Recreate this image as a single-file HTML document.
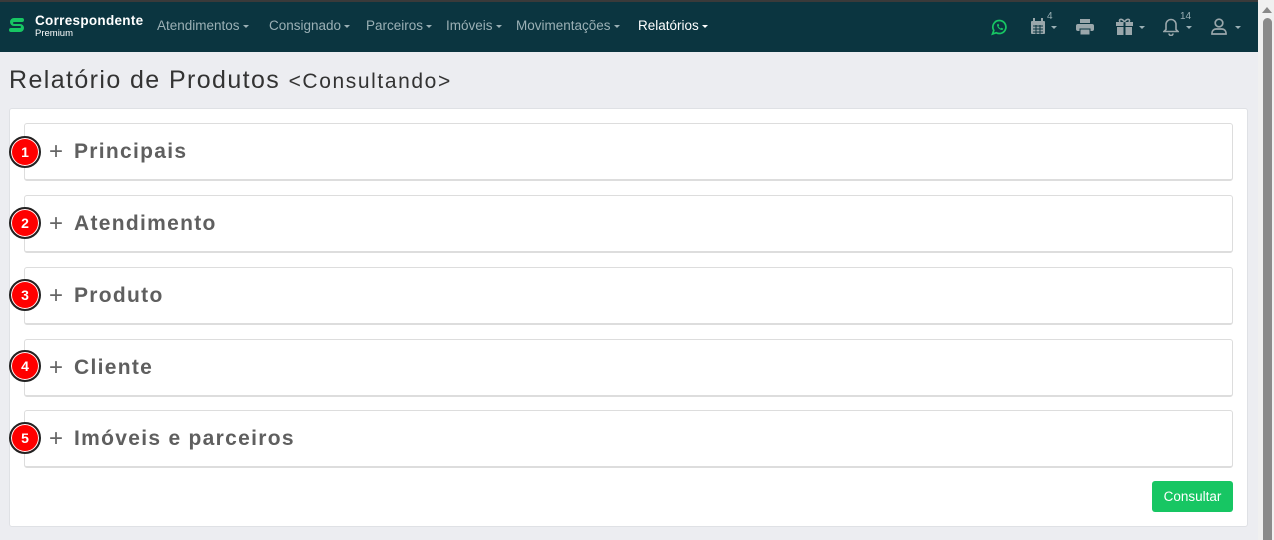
<!DOCTYPE html>
<html><head><meta charset="utf-8"><style>
*{box-sizing:border-box;margin:0;padding:0}
body{width:1274px;height:540px;overflow:hidden;background:#ecedf1;font-family:"Liberation Sans",sans-serif;position:relative}
.top{position:absolute;left:0;top:0;width:1258px;height:2px;background:#3a3a3a}
.nav{position:absolute;left:0;top:2px;width:1258px;height:50px;background:#0b3540;color:#9bb0b5;font-size:13.5px}
.nav .it{position:absolute;top:16px;white-space:nowrap}
.car{display:inline-block;width:0;height:0;border-left:3px solid transparent;border-right:3px solid transparent;border-top:3px solid currentColor;vertical-align:middle;margin-left:3px}
.sb{position:absolute;left:1258px;top:0;width:16px;height:540px;background:#f0f0f0}
.thumb{position:absolute;left:1263px;top:18px;width:9px;height:522px;background:#8a8a8a;border-radius:5px 5px 0 0}
h1{position:absolute;left:9px;top:66px;font-weight:normal;font-size:25px;color:#333;letter-spacing:1.4px;white-space:nowrap}
h1 small{font-size:21px;letter-spacing:1.6px}
.card{position:absolute;left:9px;top:108px;width:1239px;height:419px;background:#fff;border:1px solid #dfe1e5;border-radius:3px}
.p{position:absolute;left:24px;width:1209px;height:58px;background:#fff;border:1px solid #ddd;border-bottom:2px solid #ddd;border-radius:3px}
.p .t{position:absolute;left:49px;top:16px;font-size:21px;font-weight:bold;color:#5f5f5f;letter-spacing:1.3px;white-space:nowrap}
.p .pl{position:absolute;left:24px;top:14px;font-size:24px;color:#666;font-weight:normal}
.b{position:absolute;left:9px;width:32px;height:32px;border-radius:50%;background:#f00;border:2px solid #222;box-shadow:0 0 0 1px #fff inset;color:#fff;font-weight:bold;font-size:14px;text-align:center;line-height:28px}
.btn{position:absolute;left:1152px;top:481px;width:81px;height:31px;background:#17c663;border-radius:3px;color:#fff;font-size:13.5px;text-align:center;line-height:31px}
</style></head><body>
<div class="top"></div>
<div class="nav">
<svg style="position:absolute;left:9px;top:14px" width="16" height="20" viewBox="0 0 16 20"><path d="M4 2h9a2 2 0 0 1 0 4H5a1 1 0 0 0 0 2h6a4 4 0 0 1 0 8H2a2 2 0 0 1 0-4h9a1 1 0 0 0 0-2H5a4 4 0 0 1 0-8z" fill="#17c663"/></svg>
<div class="it" style="left:35px;top:11px;color:#fff;font-weight:bold;font-size:13.5px;letter-spacing:0.3px">Correspondente</div>
<div class="it" style="left:35px;top:26px;color:#fff;font-size:9.5px">Premium</div>
<div class="it" style="left:157px">Atendimentos<span class="car"></span></div>
<div class="it" style="left:269px">Consignado<span class="car"></span></div>
<div class="it" style="left:366px">Parceiros<span class="car"></span></div>
<div class="it" style="left:446px">Imóveis<span class="car"></span></div>
<div class="it" style="left:516px">Movimentações<span class="car"></span></div>
<div class="it" style="left:638px;color:#fff">Relatórios<span class="car"></span></div>
<svg style="position:absolute;left:991px;top:17px" width="17" height="17" viewBox="0 0 17 17"><path d="M8.5 1.5a6.5 6.5 0 1 1-3.2 12.2L1.5 15l1.3-3.6A6.5 6.5 0 0 1 8.5 1.5z" fill="none" stroke="#17c663" stroke-width="1.7"/><path d="M6 5.5c0 3 2.5 5.5 5.5 5.5l.8-1.4-1.8-.8-.7.7c-1-.4-1.9-1.3-2.3-2.3l.7-.7-.8-1.8z" fill="#17c663"/></svg>
<svg style="position:absolute;left:1030px;top:16px" width="16" height="17" viewBox="0 0 16 17"><rect x="1" y="3" width="14" height="13" rx="1" fill="#9aa7ab"/><rect x="3" y="0" width="2" height="4" fill="#9aa7ab"/><rect x="11" y="0" width="2" height="4" fill="#9aa7ab"/><path d="M3 8h10M3 11h10M3 14h10M6 7v9M10 7v9" stroke="#0b3540" stroke-width="1"/></svg>
<div class="it" style="left:1047px;top:9px;font-size:10px">4</div><span class="car" style="position:absolute;left:1051px;top:24px;margin:0"></span>
<svg style="position:absolute;left:1076px;top:17px" width="18" height="16" viewBox="0 0 18 16"><rect x="4" y="0" width="10" height="4" fill="#9aa7ab"/><rect x="0" y="5" width="18" height="7" rx="2" fill="#9aa7ab"/><rect x="4" y="10" width="10" height="6" fill="#9aa7ab" stroke="#0b3540"/></svg>
<svg style="position:absolute;left:1116px;top:16px" width="17" height="17" viewBox="0 0 17 17"><rect x="0" y="4" width="17" height="4" fill="#9aa7ab"/><rect x="1" y="9" width="15" height="8" fill="#9aa7ab"/><rect x="7.5" y="4" width="2" height="13" fill="#0b3540"/><path d="M8.5 4C6 0 2 1 4 4M8.5 4C11 0 15 1 13 4" stroke="#9aa7ab" stroke-width="1.6" fill="none"/></svg>
<span class="car" style="position:absolute;left:1139px;top:24px;margin:0"></span>
<svg style="position:absolute;left:1163px;top:16px" width="16" height="18" viewBox="0 0 16 18"><path d="M8 1.5a5 5 0 0 0-5 5v5l-2 2h14l-2-2v-5a5 5 0 0 0-5-5z" fill="none" stroke="#9aa7ab" stroke-width="1.6"/><path d="M6 15.5a2 2 0 0 0 4 0" fill="none" stroke="#9aa7ab" stroke-width="1.6"/></svg>
<div class="it" style="left:1180px;top:9px;font-size:10px">14</div><span class="car" style="position:absolute;left:1186px;top:24px;margin:0"></span>
<svg style="position:absolute;left:1211px;top:16px" width="16" height="17" viewBox="0 0 16 17"><circle cx="8" cy="5" r="3.8" fill="none" stroke="#9aa7ab" stroke-width="1.7"/><path d="M1 16v-1a4 4 0 0 1 4-4h6a4 4 0 0 1 4 4v1z" fill="none" stroke="#9aa7ab" stroke-width="1.7"/></svg>
<span class="car" style="position:absolute;left:1235px;top:24px;margin:0"></span>
</div>
<div class="sb"></div><div class="thumb"></div>
<svg style="position:absolute;left:1261px;top:6px" width="12" height="8"><path d="M1 7L6 1l5 6z" fill="#888"/></svg>
<h1>Relatório de Produtos <small>&lt;Consultando&gt;</small></h1>
<div class="card"></div>
<div class="p" style="top:123px"><span class="pl">+</span><span class="t">Principais</span></div>
<div class="p" style="top:195px"><span class="pl">+</span><span class="t">Atendimento</span></div>
<div class="p" style="top:267px"><span class="pl">+</span><span class="t">Produto</span></div>
<div class="p" style="top:339px"><span class="pl">+</span><span class="t">Cliente</span></div>
<div class="p" style="top:410px"><span class="pl">+</span><span class="t">Imóveis e parceiros</span></div>
<div class="b" style="top:136px">1</div>
<div class="b" style="top:207px">2</div>
<div class="b" style="top:279px">3</div>
<div class="b" style="top:350px">4</div>
<div class="b" style="top:422px">5</div>
<div class="btn">Consultar</div>
</body></html>
